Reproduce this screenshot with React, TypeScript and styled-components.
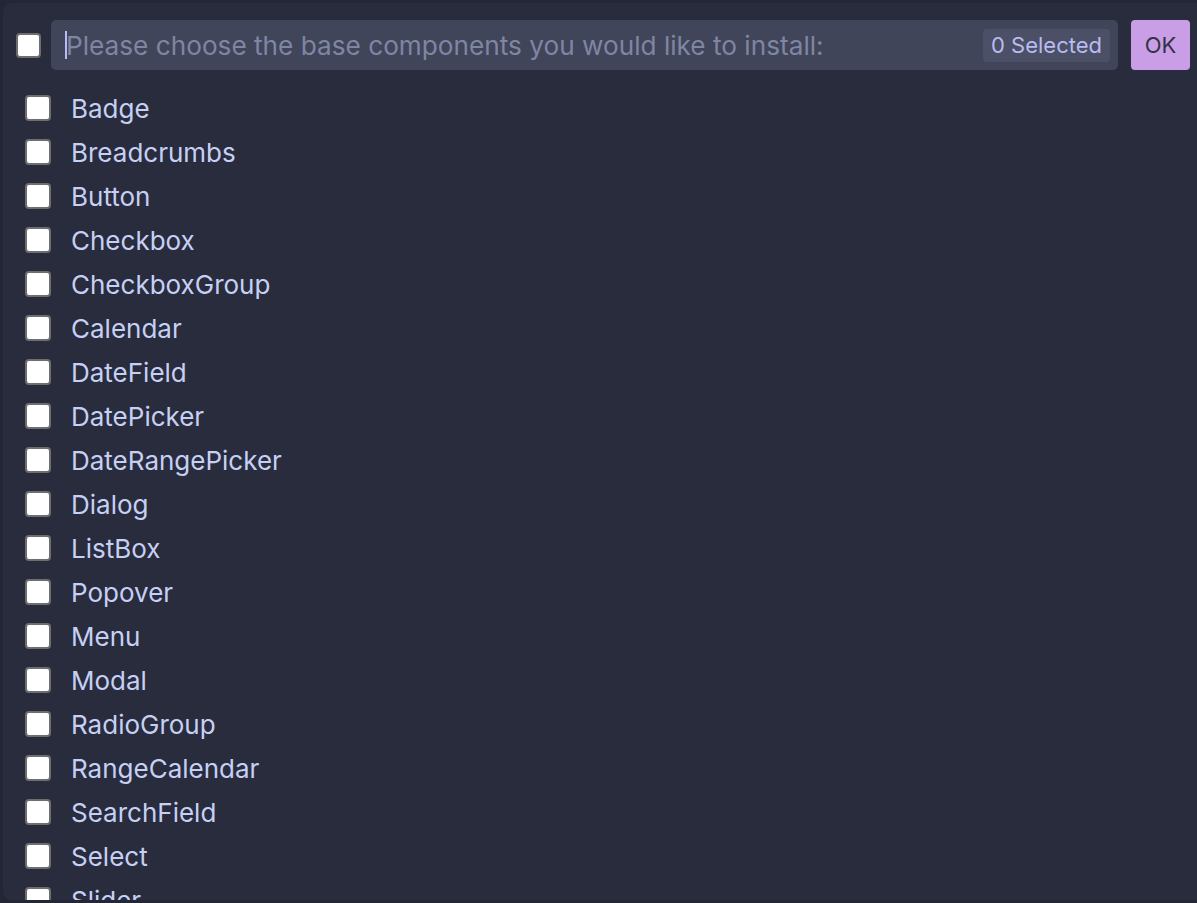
import React from "react";
import styled, { createGlobalStyle } from "styled-components";

const GlobalStyle = createGlobalStyle`
  html, body {
    margin: 0;
    padding: 0;
    background: #232634;
    overflow: hidden;
    font-family: Inter, "Noto Sans", sans-serif;
  }
`;

const SPanel = styled.div`
  margin: 3px 0 0 3px;
  width: 1210px;
  height: 897px;
  background: #292c3c;
  border-radius: 8px;
  overflow: hidden;
  padding: 17px 0 0 0;
  box-sizing: border-box;
`;

const SHeader = styled.div`
  display: flex;
  align-items: center;
  height: 50px;
  padding-left: 13px;
`;

const SBox = styled.span<{ $size?: number }>`
  flex: none;
  display: inline-block;
  width: ${(p) => p.$size ?? 26}px;
  height: ${(p) => p.$size ?? 26}px;
  box-sizing: border-box;
  background: #ffffff;
  border: 2px solid #6e6e6e;
  border-radius: 4px;
`;

const SInput = styled.div`
  margin-left: 10px;
  width: 1067px;
  height: 50px;
  box-sizing: border-box;
  background: #414559;
  border-radius: 5px;
  display: flex;
  align-items: center;
  padding: 0 8px 0 14px;
`;

const SCaret = styled.span`
  width: 2px;
  height: 28px;
  background: #babbf1;
  margin-right: -1px;
`;

const SPlaceholder = styled.span`
  flex: 1;
  font-size: 26.2px;
  color: #7f86a3;
  white-space: nowrap;
`;

const SCount = styled.span`
  background: #4b5066;
  color: #babbf1;
  font-size: 22px;
  border-radius: 4px;
  padding: 3px 8px;
  line-height: 27px;
`;

const SOk = styled.button`
  margin-left: 13px;
  width: 59px;
  height: 50px;
  border: none;
  border-radius: 4px;
  background: #ca9ee6;
  color: #303446;
  font-family: inherit;
  font-size: 22px;
  padding: 0;
`;

const SList = styled.ul`
  list-style: none;
  margin: 16px 0 0 0;
  padding: 0 0 0 22px;
`;

const SItem = styled.li`
  display: flex;
  align-items: center;
  height: 44px;
  gap: 20px;
  font-size: 26px;
  color: #c6d0f5;
`;

const components = [
  "Badge",
  "Breadcrumbs",
  "Button",
  "Checkbox",
  "CheckboxGroup",
  "Calendar",
  "DateField",
  "DatePicker",
  "DateRangePicker",
  "Dialog",
  "ListBox",
  "Popover",
  "Menu",
  "Modal",
  "RadioGroup",
  "RangeCalendar",
  "SearchField",
  "Select",
  "Slider",
  "Switch",
];

export default function App() {
  return (
    <>
      <GlobalStyle />
      <SPanel>
        <SHeader>
          <SBox $size={25} />
          <SInput>
            <SCaret />
            <SPlaceholder>
              Please choose the base components you would like to install:
            </SPlaceholder>
            <SCount>0 Selected</SCount>
          </SInput>
          <SOk>OK</SOk>
        </SHeader>
        <SList>
          {components.map((name) => (
            <SItem key={name}>
              <SBox />
              {name}
            </SItem>
          ))}
        </SList>
      </SPanel>
    </>
  );
}
